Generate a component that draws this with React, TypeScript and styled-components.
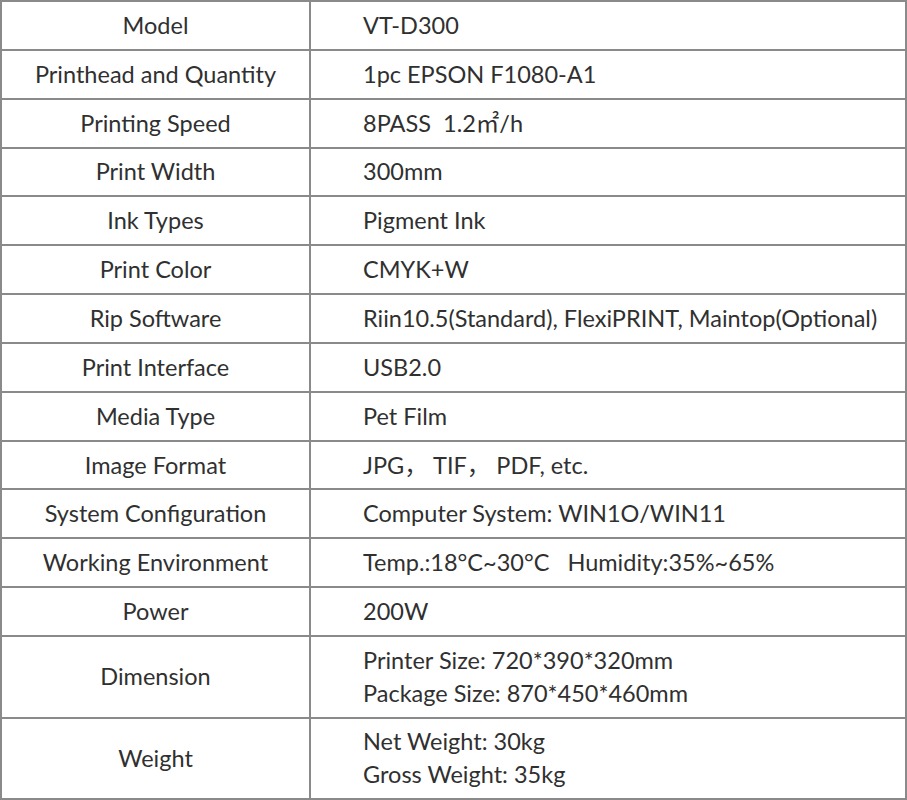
import styled, { createGlobalStyle } from 'styled-components';

const GlobalStyle = createGlobalStyle`
	body {
		margin: 0;
		background: #ffffff;
		font-family: Lato, 'Noto Sans', 'Noto Sans CJK SC', sans-serif;
	}
`;

const SpecGrid = styled.div`
	display: grid;
	grid-template-columns: 307px 594px;
	grid-template-rows: repeat(13, 46.85px) 80px 79px;
	gap: 2px;
	padding: 2px;
	width: 907px;
	box-sizing: border-box;
	background: #8a8a8a;
`;

const Cell = styled.div<{ $label?: boolean }>`
	background: #ffffff;
	color: #303030;
	font-size: 23.5px;
	line-height: 33px;
	display: flex;
	flex-direction: column;
	justify-content: center;
	align-items: ${(props) => (props.$label ? 'center' : 'flex-start')};
	padding-left: ${(props) => (props.$label ? '0' : '52px')};
	white-space: pre;
`;

const specs: [string, string[]][] = [
	['Model', ['VT-D300']],
	['Printhead and Quantity', ['1pc EPSON F1080-A1']],
	['Printing Speed', ['8PASS  1.2㎡/h']],
	['Print Width', ['300mm']],
	['Ink Types', ['Pigment Ink']],
	['Print Color', ['CMYK+W']],
	['Rip Software', ['Riin10.5(Standard), FlexiPRINT, Maintop(Optional)']],
	['Print Interface', ['USB2.0']],
	['Media Type', ['Pet Film']],
	['Image Format', ['JPG， TIF， PDF, etc.']],
	['System Configuration', ['Computer System: WIN1O/WIN11']],
	['Working Environment', ['Temp.:18°C~30°C   Humidity:35%~65%']],
	['Power', ['200W']],
	['Dimension', ['Printer Size: 720*390*320mm', 'Package Size: 870*450*460mm']],
	['Weight', ['Net Weight: 30kg', 'Gross Weight: 35kg']],
];

export default function App() {
	return (
		<>
			<GlobalStyle />
			<SpecGrid>
				{specs.map(([label, values]) => (
					<>
						<Cell key={label} $label>
							{label}
						</Cell>
						<Cell key={`${label}-v`}>
							{values.map((v) => (
								<span key={v}>{v}</span>
							))}
						</Cell>
					</>
				))}
			</SpecGrid>
		</>
	);
}
